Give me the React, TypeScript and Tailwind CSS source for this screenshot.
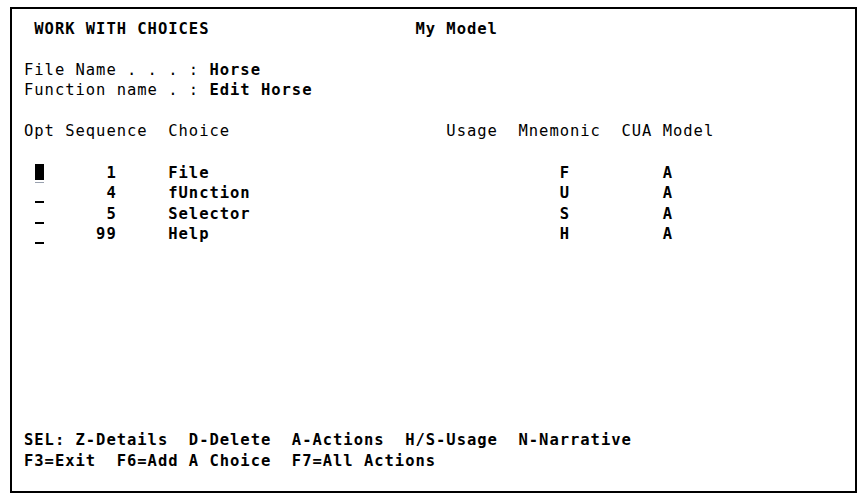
const rowH = 'h-[20.6px] leading-[20.6px] whitespace-pre'

function Row({ children }: { children?: React.ReactNode }) {
  return <div className={rowH}>{children}</div>
}

const choices = [
  { seq: '    1', name: 'File', mn: 'F' },
  { seq: '    4', name: 'fUnction', mn: 'U' },
  { seq: '    5', name: 'Selector', mn: 'S' },
  { seq: '   99', name: 'Help', mn: 'H' },
]

export default function App() {
  return (
    <div className="w-[867px] h-[500px] bg-white text-black pt-[7px] pl-[10px]">
      <div
        className="w-[847px] h-[486px] border-2 border-black pt-[9.5px] pl-[12px] text-[15.5px] tracking-[0.97px]"
        style={{ fontFamily: '"DejaVu Sans Mono", "Liberation Mono", monospace' }}
      >
        <Row>
          <span className="font-bold">{' WORK WITH CHOICES                    My Model'}</span>
        </Row>
        <Row />
        <Row>
          {'File Name . . . : '}
          <span className="font-bold">Horse</span>
        </Row>
        <Row>
          {'Function name . : '}
          <span className="font-bold">Edit Horse</span>
        </Row>
        <Row />
        <Row>{'Opt Sequence  Choice                     Usage  Mnemonic  CUA Model'}</Row>
        <Row />
        {choices.map((c, i) => (
          <Row key={c.name}>
            <span>{' '}</span>
            {i === 0 ? (
              <span className="relative inline-block w-[10.3px] h-[20.6px] align-top">
                <span className="absolute left-[1px] top-[1px] w-[9px] h-[16px] bg-black" />
                <span className="absolute left-[1px] top-[19px] w-[9px] h-px bg-gray-400" />
              </span>
            ) : (
              <span className="relative inline-block w-[10.3px] h-[20.6px] align-top">
                <span className="absolute left-[1px] top-[18px] w-[9px] h-[2px] bg-black" />
              </span>
            )}
            <span className="font-bold">
              {'  ' + c.seq + '     ' + c.name.padEnd(38, ' ') + c.mn + '         A'}
            </span>
          </Row>
        ))}
        {Array.from({ length: 9 }).map((_, i) => (
          <Row key={i} />
        ))}
        <Row>
          <span className="font-bold">{'SEL: Z-Details  D-Delete  A-Actions  H/S-Usage  N-Narrative'}</span>
        </Row>
        <Row>
          <span className="font-bold">{'F3=Exit  F6=Add A Choice  F7=All Actions'}</span>
        </Row>
      </div>
    </div>
  )
}
